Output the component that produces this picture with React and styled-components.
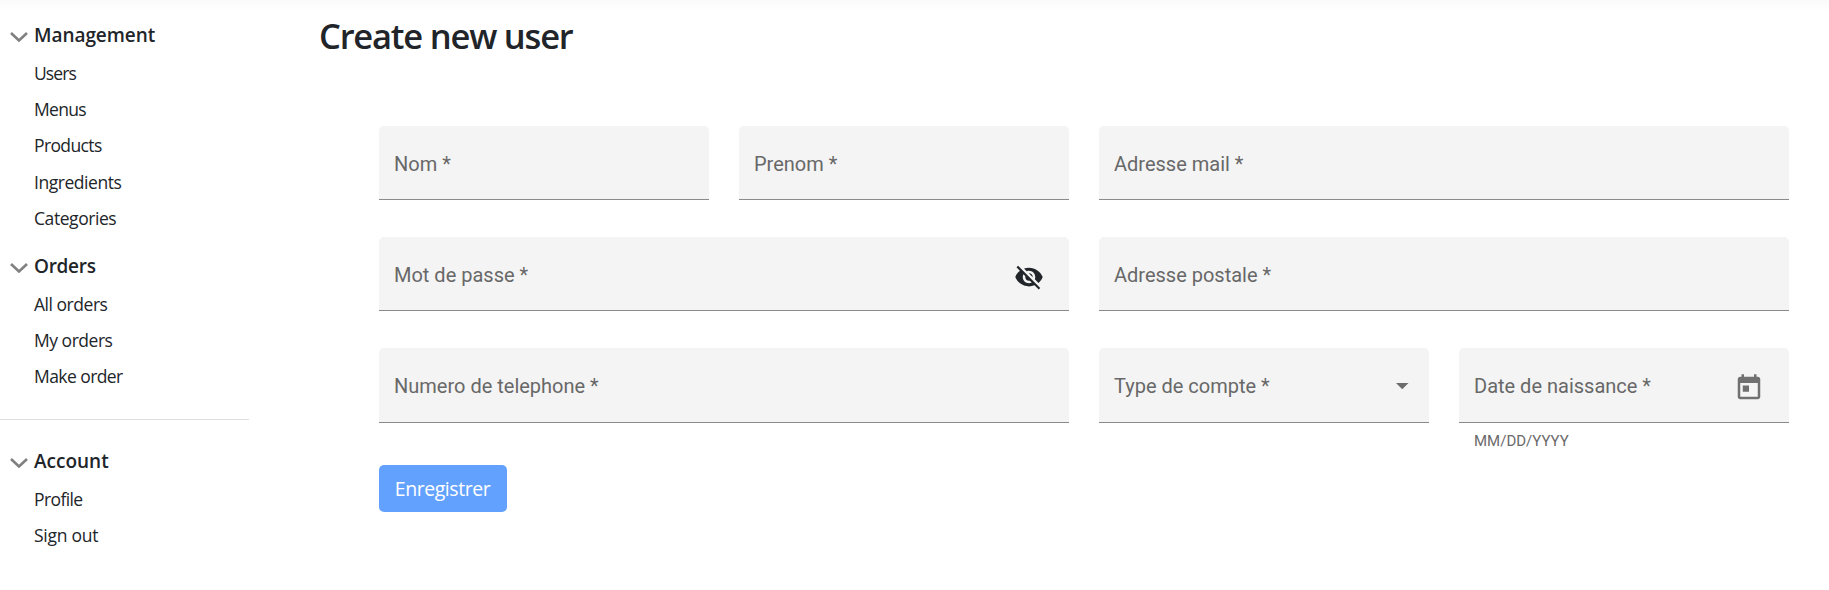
import React from 'react';
import styled, { createGlobalStyle } from 'styled-components';

const GlobalStyle = createGlobalStyle`
  *, *::before, *::after { box-sizing: border-box; }
  body {
    margin: 0;
    background: #fff;
    color: #212529;
    font-family: "Open Sans", "Noto Sans", sans-serif;
  }
`;

const Page = styled.div`
  display: flex;
  min-height: 590px;
  background: linear-gradient(#fafafa, #fff 12px);
`;

const Sidebar = styled.nav`
  width: 249px;
  flex: none;
  padding-top: 15px;
`;

const Section = styled.section`
  & + & { margin-top: 10px; }
`;

const SectionTitle = styled.h2`
  display: flex;
  align-items: center;
  height: 40px;
  margin: 0;
  padding-left: 10px;
  font-size: 19px;
  font-weight: 600;
  line-height: 40px;
  letter-spacing: ${(p) => p.$spacing}px;
`;

const Chevron = styled.svg`
  flex: none;
  width: 18px;
  height: 10px;
  margin: 4px 6px 0 0;
  fill: none;
  stroke: #808080;
  stroke-width: 2.6;
`;

const NavList = styled.ul`
  margin: 0;
  padding: 0 0 0 34px;
  list-style: none;
`;

const NavItem = styled.li`
  height: 36.2px;
  font-size: 17.5px;
  line-height: 36.2px;
  letter-spacing: ${(p) => p.$spacing}px;
  white-space: nowrap;
`;

const Divider = styled.hr`
  height: 1px;
  margin: 24px 0 21.4px;
  border: 0;
  background: #dedede;
`;

const Main = styled.main`
  flex: 1;
  padding: 11px 40px 0 70px;
`;

const Title = styled.h1`
  height: 50px;
  margin: 0;
  font-size: 34.5px;
  font-weight: 600;
  line-height: 50px;
  letter-spacing: -1.2px;
`;

const Form = styled.form`
  display: grid;
  grid-template-columns: 330px 330px 330px 330px;
  column-gap: 30px;
  row-gap: 37px;
  padding: 65px 0 0 60px;
`;

const Field = styled.label`
  grid-column: span ${(p) => p.$span || 1};
  display: flex;
  align-items: center;
  justify-content: space-between;
  height: 74px;
  padding: 2px ${(p) => p.$end || 15}px 0 15px;
  border-bottom: 1px solid #8a8a8a;
  border-radius: 5px 5px 0 0;
  background: #f4f4f4;
  color: #686868;
  font: 400 20px/30px Roboto, sans-serif;
`;

const LowerField = styled(Field)`
  height: 75px;
`;

const Icon = styled.svg`
  width: 30px;
  height: 30px;
  margin-top: ${(p) => p.$drop || 0}px;
  fill: ${(p) => p.$color};
`;

const Caret = styled.svg`
  width: 12.5px;
  height: 6.25px;
  fill: #6c6c6c;
`;

const DateColumn = styled.div`
  height: 80px;
`;

const Hint = styled.div`
  padding: 8px 15px 0;
  color: #6a6a6a;
  font: 400 15px/20px Roboto, sans-serif;
`;

const SubmitButton = styled.button`
  width: 128px;
  height: 47px;
  margin: 0;
  padding: 1px 1px 0 0;
  border: 0;
  border-radius: 5px;
  background: #63a1ff;
  color: #fff;
  font: 400 19.5px/46px "Open Sans", "Noto Sans", sans-serif;
  letter-spacing: -0.45px;
`;

function NavSection({ title, spacing, items }) {
  return (
    <Section>
      <SectionTitle $spacing={spacing}>
        <Chevron viewBox="0 0 18 10"><path d="M1 1l8 7.5L17 1" /></Chevron>
        {title}
      </SectionTitle>
      <NavList>
        {items.map(([name, tracking]) => <NavItem key={name} $spacing={tracking}>{name}</NavItem>)}
      </NavList>
    </Section>
  );
}

const management = [['Users', -0.9], ['Menus', -0.7], ['Products', -0.62], ['Ingredients', -0.45], ['Categories', -0.43]];
const orders = [['All orders', -0.47], ['My orders', -0.48], ['Make order', -0.57]];
const account = [['Profile', -0.6], ['Sign out', -0.25]];

export default function App() {
  return (
    <>
      <GlobalStyle />
      <Page>
        <Sidebar>
          <NavSection title="Management" spacing={-0.06} items={management} />
          <NavSection title="Orders" spacing={-0.3} items={orders} />
          <Divider />
          <NavSection title="Account" spacing={0} items={account} />
        </Sidebar>
        <Main>
          <Title>Create new user</Title>
          <Form>
            <Field>Nom *</Field>
            <Field>Prenom *</Field>
            <Field $span={2}>Adresse mail *</Field>
            <Field $span={2} $end={25}>
              Mot de passe *
              <Icon viewBox="0 0 24 24" $color="#212529" $drop={4}>
                <path d="M12 7c2.76 0 5 2.24 5 5 0 .65-.13 1.26-.36 1.83l2.92 2.92c1.51-1.26 2.7-2.89 3.43-4.75-1.73-4.39-6-7.5-11-7.5-1.4 0-2.74.25-3.98.7l2.16 2.16C10.74 7.13 11.35 7 12 7zM2 4.27l2.28 2.28.46.46C3.08 8.3 1.78 10.02 1 12c1.73 4.39 6 7.5 11 7.5 1.55 0 3.03-.3 4.38-.84l.42.42L19.73 22 21 20.73 3.27 3 2 4.27zM7.53 9.8l1.55 1.55c-.05.21-.08.43-.08.65 0 1.66 1.34 3 3 3 .22 0 .44-.03.65-.08l1.55 1.55c-.67.33-1.41.53-2.2.53-2.76 0-5-2.24-5-5 0-.79.2-1.53.53-2.2zm4.31-.78l3.15 3.15.02-.16c0-1.66-1.34-3-3-3l-.17.01z" />
              </Icon>
            </Field>
            <Field $span={2}>Adresse postale *</Field>
            <LowerField $span={2}>Numero de telephone *</LowerField>
            <LowerField $end={20.5}>
              Type de compte *
              <Caret viewBox="0 0 10 5"><path d="M0 0h10L5 5z" /></Caret>
            </LowerField>
            <DateColumn>
              <LowerField $end={25}>
                Date de naissance *
                <Icon viewBox="0 0 24 24" $color="#707070" $drop={3}>
                  <path d="M19 3h-1V1h-2v2H8V1H6v2H5c-1.11 0-1.99.9-1.99 2L3 19c0 1.1.89 2 2 2h14c1.1 0 2-.9 2-2V5c0-1.1-.9-2-2-2zm0 16H5V8h14v11zM7 10h5v5H7z" />
                </Icon>
              </LowerField>
              <Hint>MM/DD/YYYY</Hint>
            </DateColumn>
            <SubmitButton type="button">Enregistrer</SubmitButton>
          </Form>
        </Main>
      </Page>
    </>
  );
}
